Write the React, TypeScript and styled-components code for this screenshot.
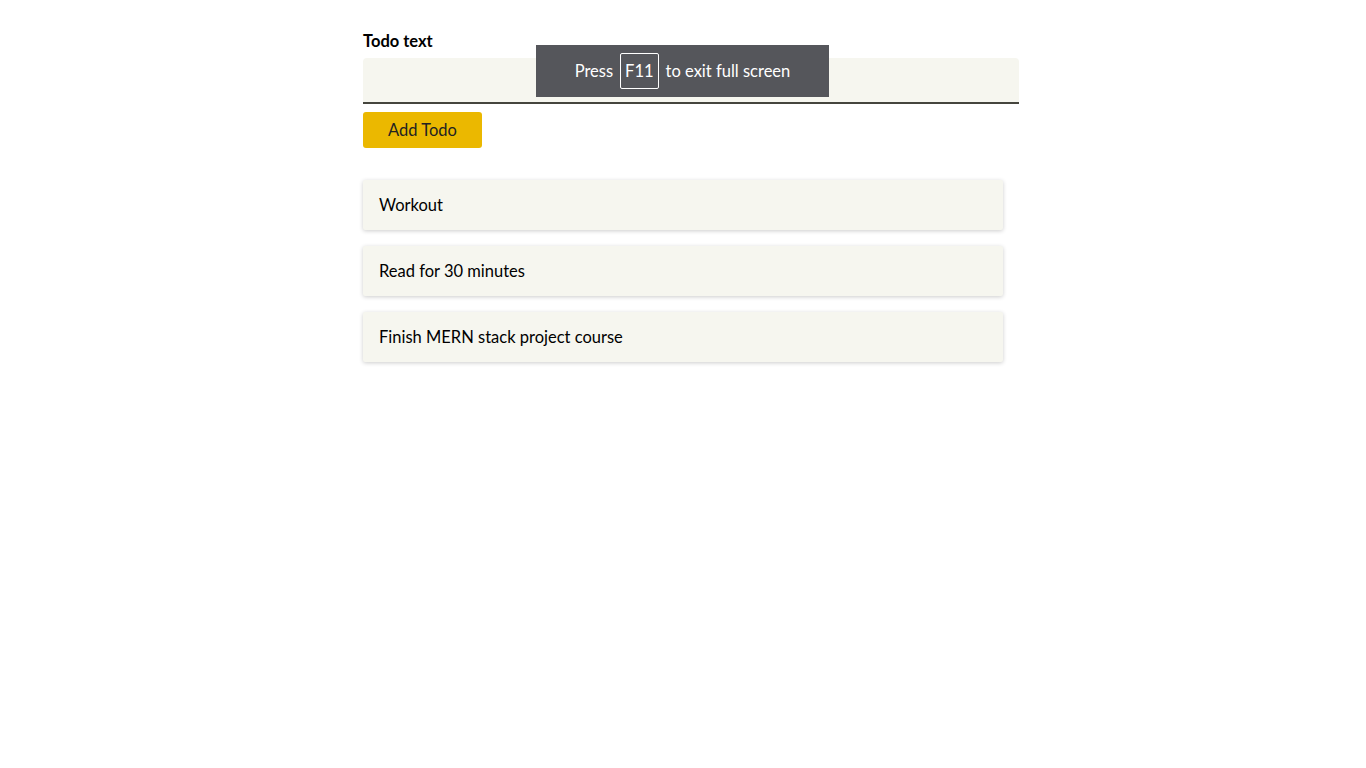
import React from 'react';
import styled, { createGlobalStyle } from 'styled-components';

const GlobalStyle = createGlobalStyle`
  html, body {
    margin: 0;
    padding: 0;
    background: #ffffff;
    font-family: Lato, "Noto Sans", sans-serif;
    color: #000000;
  }
`;

const Page = styled.div`
  width: 640px;
  margin: 0 auto;
  padding: 30px 0 40px;
`;

const Form = styled.form`
  display: flex;
  flex-direction: column;
  align-items: flex-start;
`;

const Label = styled.label`
  font-size: 16.5px;
  font-weight: 700;
  line-height: 22px;
  margin-bottom: 6px;
`;

/* content-box on purpose: the padding pushes it 16px past the list */
const TextInput = styled.input`
  box-sizing: content-box;
  width: 100%;
  height: 44px;
  border: none;
  border-bottom: 2px solid #45453d;
  border-radius: 4px 4px 0 0;
  background: #f6f6ef;
  font: inherit;
  font-size: 16px;
  padding: 0 8px;
  outline: none;
`;

const AddButton = styled.button`
  margin-top: 8px;
  height: 36px;
  padding: 0 25px;
  border: none;
  border-radius: 3px;
  background: #ebb800;
  color: #222222;
  font: inherit;
  font-size: 16.5px;
  cursor: pointer;
`;

const List = styled.ul`
  list-style: none;
  margin: 32px 0 0;
  padding: 0;
  display: flex;
  flex-direction: column;
  gap: 16px;
`;

const Item = styled.li`
  box-sizing: border-box;
  height: 50px;
  display: flex;
  align-items: center;
  padding: 0 16px;
  background: #f6f6ef;
  border-radius: 2px;
  box-shadow: 0 1px 4px rgba(0, 0, 0, 0.2);
  font-size: 16.5px;
`;

const FullscreenNotice = styled.div`
  position: fixed;
  top: 45px;
  left: 536px;
  width: 293px;
  height: 52px;
  box-sizing: border-box;
  display: flex;
  align-items: center;
  justify-content: center;
  gap: 7px;
  background: #55565b;
  color: #ffffff;
  font-size: 16.5px;
`;

const Key = styled.span`
  display: inline-flex;
  align-items: center;
  justify-content: center;
  height: 36px;
  padding: 0 4px;
  border: 1px solid #ffffff;
  border-radius: 2px;
  box-sizing: border-box;
`;

const todos = ['Workout', 'Read for 30 minutes', 'Finish MERN stack project course'];

export default function App() {
  return (
    <>
      <GlobalStyle />
      <Page>
        <Form onSubmit={e => e.preventDefault()}>
          <Label htmlFor="todo">Todo text</Label>
          <TextInput id="todo" type="text" />
          <AddButton type="submit">Add Todo</AddButton>
        </Form>
        <List>
          {todos.map(t => (
            <Item key={t}>{t}</Item>
          ))}
        </List>
      </Page>
      <FullscreenNotice>
        Press <Key>F11</Key> to exit full screen
      </FullscreenNotice>
    </>
  );
}
